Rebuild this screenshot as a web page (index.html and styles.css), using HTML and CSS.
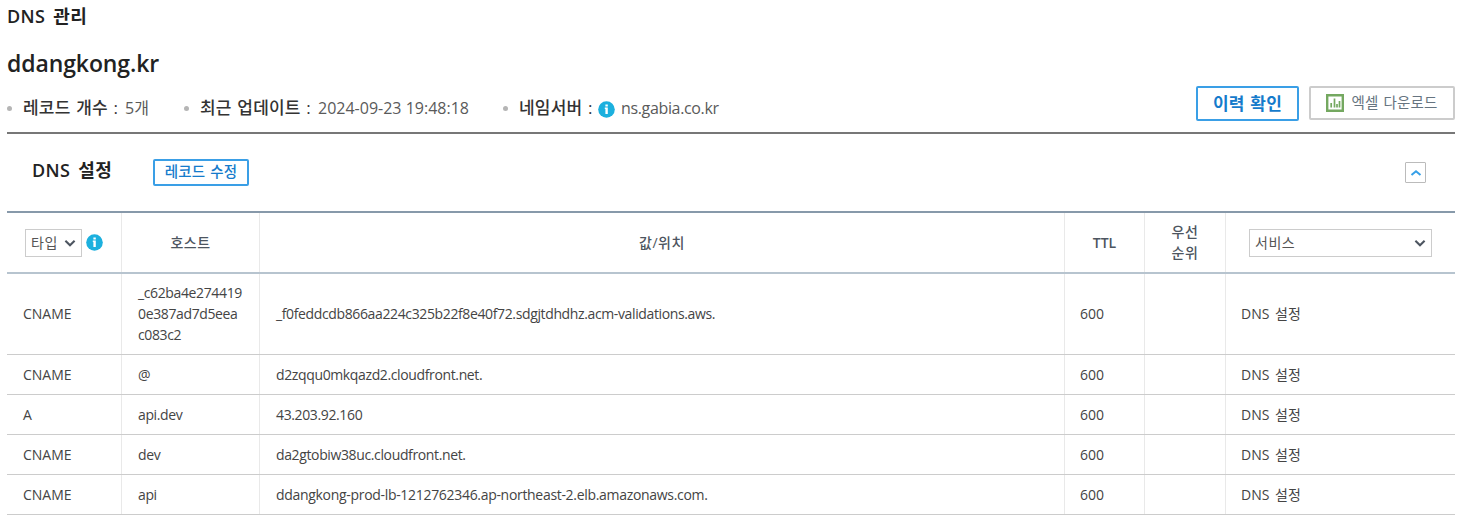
FILE: index.html
```html
<!DOCTYPE html>
<html lang="ko">
<head>
<meta charset="utf-8">
<title>DNS 관리</title>
<link rel="stylesheet" href="styles.css">
</head>
<body>
<svg class="defs" width="0" height="0">
  <symbol id="info" viewBox="0 0 17 17"><circle cx="8.5" cy="8.5" r="8.3" fill="#1cb0de"/><path d="M7.4 3.4h2.4v2H7.4zM6.800 6.600h3v6.500H7.400V8.100h-.6z" fill="#fff"/></symbol>
  <symbol id="down" viewBox="0 0 12 8"><path d="M1.400 1.800 6 6.200l4.600-4.400" fill="none" stroke="#4d5560" stroke-width="2.100"/></symbol>
</svg>
<main class="page">
  <h1 class="title">DNS 관리</h1>
  <h2 class="domain">ddangkong.kr</h2>
  <div class="summary">
    <div class="meta meta-count"><i class="dot"></i><b>레코드 개수 :</b><span>5개</span></div>
    <div class="meta meta-date"><i class="dot"></i><b>최근 업데이트 :</b><span>2024-09-23 19:48:18</span></div>
    <div class="meta meta-ns"><i class="dot"></i><b>네임서버 :</b><svg class="info"><use href="#info"/></svg><span class="ns">ns.gabia.co.kr</span></div>
    <div class="actions">
      <button class="btn history">이력 확인</button>
      <button class="btn excel"><svg width="18" height="18" viewBox="0 0 18 18"><path d="M1.200 1.200h15.600v15.600H1.200z" fill="#fff" stroke="#74a860" stroke-width="2.400"/><path d="M5.200 9v4.500M8.500 4.500v9M11 10v3.500M13.500 7v6.500" stroke="#74a860" stroke-width="1.700"/></svg><span>엑셀 다운로드</span></button>
    </div>
  </div>
  <div class="section">
    <h3 class="section-title">DNS 설정</h3>
    <button class="btn edit">레코드 수정</button>
    <button class="fold"><svg width="12" height="8" viewBox="0 0 12 8"><path d="M1.500 6 6 2.200 10.500 6" fill="none" stroke="#36a0e8" stroke-width="2"/></svg></button>
  </div>
  <div class="table">
    <div class="row head">
      <div class="type"><span class="select small">타입<svg width="12" height="8"><use href="#down"/></svg></span><svg class="info"><use href="#info"/></svg></div>
      <div>호스트</div>
      <div>값/위치</div>
      <div class="ttl">TTL</div>
      <div class="prio">우선<br>순위</div>
      <div><span class="select wide">서비스<svg width="12" height="8"><use href="#down"/></svg></span></div>
    </div>
    <div class="row tall"><div>CNAME</div><div class="name host"><span>_c62ba4e274419</span><span>0e387ad7d5eea</span><span>c083c2</span></div><div class="name">_f0feddcdb866aa224c325b22f8e40f72.sdgjtdhdhz.acm-validations.aws.</div><div>600</div><div></div><div>DNS 설정</div></div>
    <div class="row"><div>CNAME</div><div class="name">@</div><div class="name">d2zqqu0mkqazd2.cloudfront.net.</div><div>600</div><div></div><div>DNS 설정</div></div>
    <div class="row"><div>A</div><div class="name">api.dev</div><div class="name">43.203.92.160</div><div>600</div><div></div><div>DNS 설정</div></div>
    <div class="row"><div>CNAME</div><div class="name">dev</div><div class="name">da2gtobiw38uc.cloudfront.net.</div><div>600</div><div></div><div>DNS 설정</div></div>
    <div class="row"><div>CNAME</div><div class="name">api</div><div class="name long">ddangkong-prod-lb-1212762346.ap-northeast-2.elb.amazonaws.com.</div><div>600</div><div></div><div>DNS 설정</div></div>
  </div>
</main>
</body>
</html>
```
FILE: styles.css
```css
* { box-sizing: border-box; }
body { margin: 0; background: #fff; color: #444; font: 14px/21px "Open Sans", "Noto Sans CJK KR", sans-serif; }
.defs { display: block; }
.page { width: 1448px; margin-left: 7px; }
h1, h2, h3 { margin: 0; color: #222; white-space: nowrap; }
button { font-family: inherit; background: #fff; padding: 0; }
.title { height: 32px; font-size: 18px; line-height: 32px; font-weight: 600; letter-spacing: .35px; word-spacing: 3px; }
.domain { height: 62px; font-size: 23px; line-height: 62px; font-weight: 600; letter-spacing: -.1px; }
.summary { display: flex; height: 40px; border-bottom: 2px solid #777; }
.meta { display: flex; align-items: center; height: 28px; font-size: 16px; white-space: nowrap; color: #5a5a5a; }
.meta b { font-size: 17px; font-weight: 500; color: #333; width: 96px; margin-right: 6px; padding-bottom: 2px; letter-spacing: .2px; word-spacing: 1px; }
.meta-date b { width: 112px; }
.meta-ns b { width: 73px; }
.meta-count { width: 177px; }
.meta-date { width: 319px; }
.dot { width: 5px; height: 5px; border-radius: 50%; background: #b5b5b5; margin: 0 11px 0 0; }
.info { width: 17px; height: 17px; flex: none; }
.meta .info { margin: 3px 6px 0 0; }
.ns { letter-spacing: -.35px; }
.actions { display: flex; gap: 10px; margin: -8px 0 0 auto; }
.btn { display: flex; align-items: center; justify-content: center; border-radius: 2px; white-space: nowrap; letter-spacing: .2px; word-spacing: 1px; }
.history { width: 103px; height: 35px; padding-bottom: 3px; border: 2px solid #3a9fe6; color: #157bcb; font-size: 17px; font-weight: 600; }
.excel { width: 146px; height: 34px; border: 2px solid #ccc; color: #667480; font-size: 14.5px; gap: 7px; }
.excel span { padding-bottom: 4px; }
.section { display: flex; height: 77px; padding: 0 29px 0 25px; }
.section-title { width: 121px; font-size: 18px; line-height: 72px; font-weight: 600; letter-spacing: .35px; word-spacing: 3px; }
.edit { width: 96px; height: 27px; padding-bottom: 4px; margin-top: 25px; border: 2px solid #3a9fe6; color: #157bcb; font-size: 14.5px; font-weight: 500; }
.fold { display: flex; align-items: center; justify-content: center; width: 21px; height: 21px; margin: 28px 0 0 auto; border: 1px solid #bbb; border-radius: 1px; }
.table { border-top: 2px solid #8799aa; }
.row { display: grid; grid-template-columns: 115px 138px 805px 80px 81px 229px; height: 40px; border-bottom: 1px solid #ccc; word-spacing: 2px; }
.row > div { display: flex; align-items: center; padding-left: 16px; border-right: 1px solid #e9e9e9; white-space: nowrap; }
.row > div:nth-child(n+4) { padding-left: 15px; }
.row > div:last-child { border-right: 0; }
.row .name { letter-spacing: -.37px; }
.row .long { letter-spacing: -.31px; }
.row.head { height: 61px; border-bottom: 2px solid #b7c4cf; font-weight: 500; color: #4d5560; letter-spacing: .5px; }
.row.head > div { justify-content: center; padding: 0; }
.row.head .ttl { font-weight: 600; letter-spacing: 0; }
.row.head .prio { padding-bottom: 2px; }
.row.tall { height: 81px; }
.row.tall > div { padding-bottom: 2px; }
.row > .host { flex-direction: column; align-items: flex-start; justify-content: center; }
.type { gap: 4px; }
.select { display: flex; align-items: center; justify-content: space-between; height: 28px; padding: 0 5px; border: 1px solid #ccc; font-weight: 400; color: #555; }
.small { width: 57px; }
.wide { width: 183px; }
```
